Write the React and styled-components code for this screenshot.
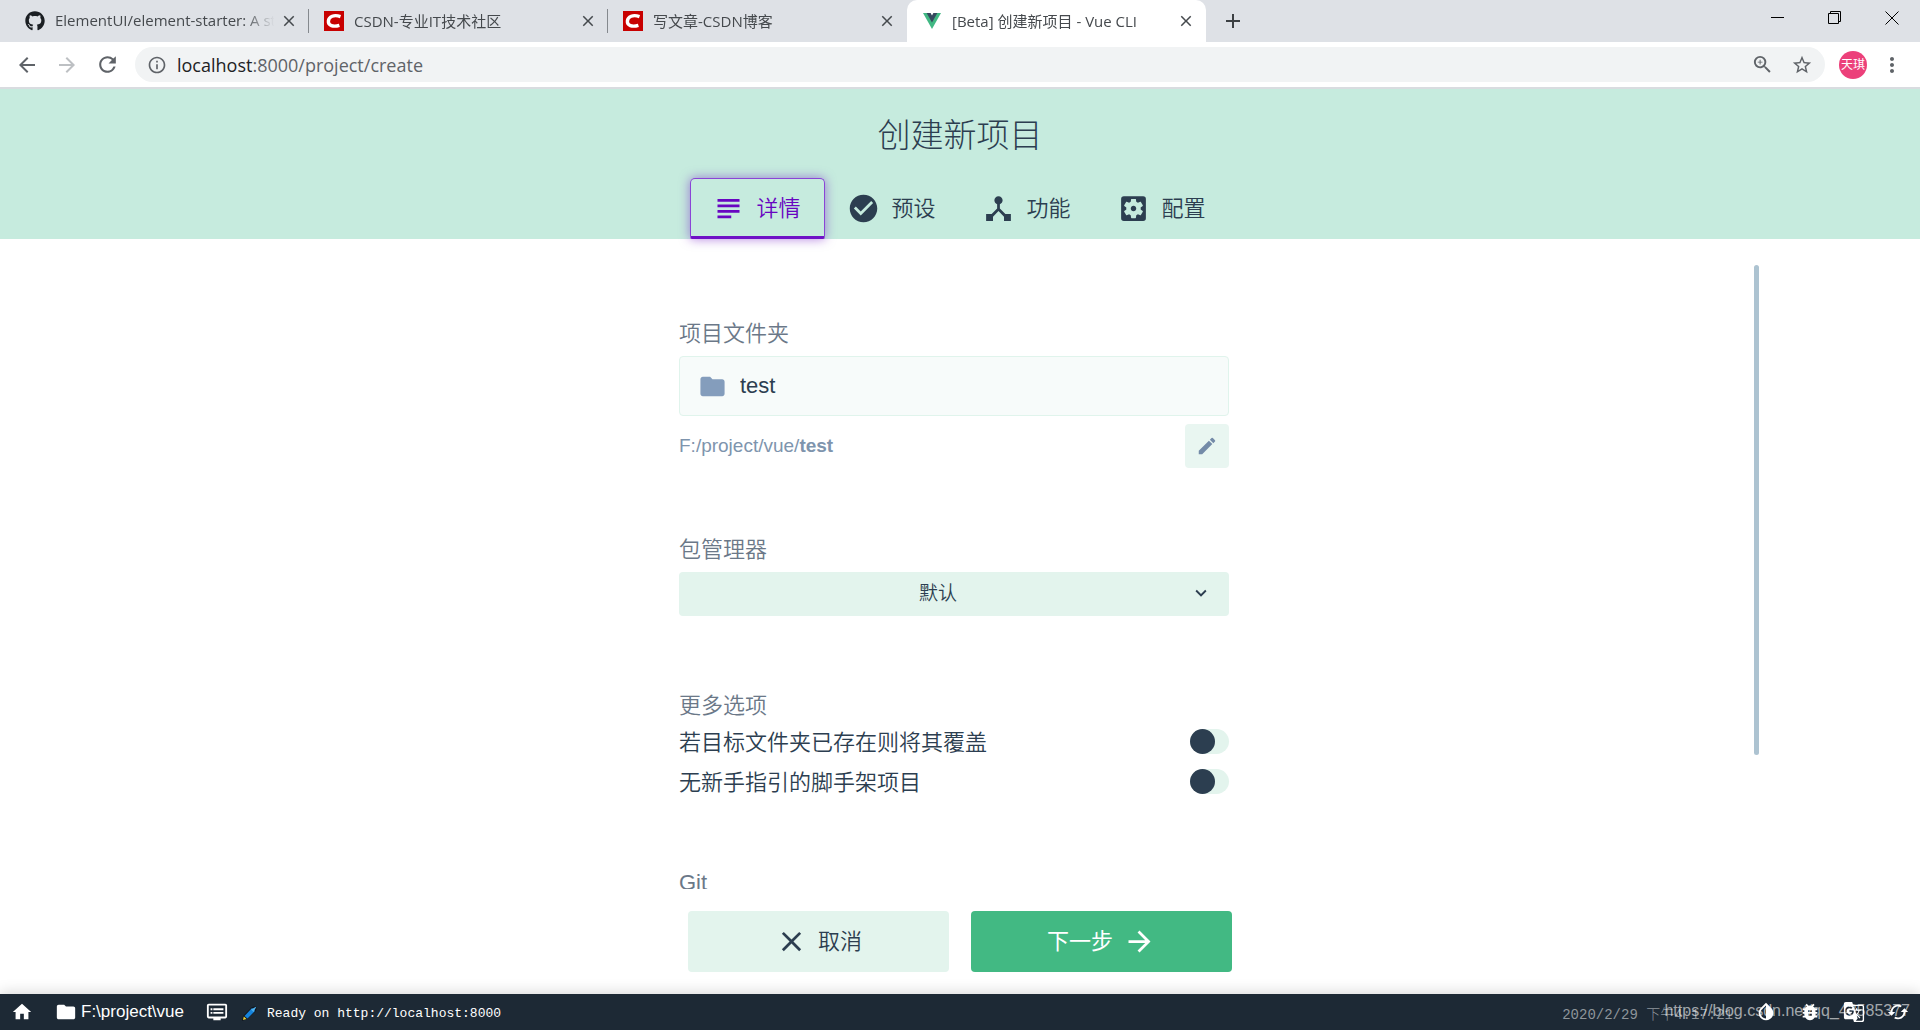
import React from 'react';
import styled, { createGlobalStyle } from 'styled-components'
import {
  MdSubject, MdCheckCircle, MdDeviceHub, MdSettingsApplications, MdFolder, MdEdit,
  MdKeyboardArrowDown, MdClose, MdArrowForward, MdArrowBack, MdRefresh, MdInfoOutline,
  MdZoomIn, MdStarBorder, MdMoreVert, MdHome, MdDvr, MdInvertColors, MdBugReport,
  MdGTranslate, MdCached, MdAdd
} from 'react-icons/md'
import { FaGithub } from 'react-icons/fa'

const GlobalStyle = createGlobalStyle`
  *{
    box-sizing: border-box;
  }
  body{
    margin: 0;
    font-family: 'Liberation Sans', 'Noto Sans CJK SC', sans-serif;
    color: #2c3e50;
    background-color: #fff;
  }
  button, input, select{
    font: inherit;
    color: inherit;
    border: none;
    margin: 0;
    padding: 0;
    background: none;
  }
  svg{
    flex: none;
    display: block;
  }
`

const Page = styled.div`
  height: 100vh;
  display: flex;
  flex-direction: column;
  overflow: hidden;
`

/* browser */
const TabStrip = styled.div`
  height: 42px;
  display: flex;
  flex: none;
  background-color: #dee1e6;
  font-family: 'Open Sans', 'Noto Sans CJK SC', sans-serif;
  font-size: 15px;
  color: #45494d;
  padding-left: 10px;
`

const BrowserTab = styled.div`
  width: 299px;
  display: flex;
  align-items: center;
  padding: 0 10px 0 15px;
  background-color: ${({ $active }) => $active ? '#fff' : 'transparent'};
  border-radius: 10px 10px 0 0;
  position: relative;
  .name{
    flex: 1;
    margin-left: 10px;
    padding-bottom: 2px;
    white-space: nowrap;
    overflow: hidden;
    mask-image: linear-gradient(to right, #000 84%, transparent 98%);
  }
  &::after{
    content: '';
    display: ${({ $divider }) => $divider ? 'block' : 'none'};
    width: 1px;
    height: 24px;
    background-color: #85898e;
    position: absolute;
    right: 0;
    top: 9px;
  }
`

const IconButton = styled.button`
  width: ${({ $size }) => $size || 20}px;
  height: ${({ $size }) => $size || 20}px;
  display: flex;
  align-items: center;
  justify-content: center;
  flex: none;
`

const NewTab = styled(IconButton)`
  align-self: center;
  margin-left: 17px;
  color: #3c4043;
`

const WindowButtons = styled.div`
  display: flex;
  align-items: flex-start;
  margin-left: auto;
  color: #000;
  button{
    width: 57px;
    height: 36px;
  }
`

const Toolbar = styled.div`
  height: 47px;
  display: flex;
  align-items: center;
  flex: none;
  padding: 0 16px 0 7px;
  border-bottom: 2px solid #d9dce0;
  color: #5f6368;
`

const Address = styled.div`
  flex: 1;
  height: 35px;
  display: flex;
  align-items: center;
  background-color: #f1f3f4;
  border-radius: 18px;
  margin: 0 14px 0 8px;
  padding: 0 3px 0 12px;
`

const Url = styled.div`
  flex: 1;
  margin-left: 10px;
  font-family: 'Open Sans', sans-serif;
  font-size: 18px;
  .host{
    color: #202124;
  }
`

const Avatar = styled.div`
  width: 28px;
  height: 28px;
  border-radius: 100%;
  background-color: #ec407a;
  color: #fff;
  font-size: 12px;
  line-height: 28px;
  text-align: center;
  margin-right: 13px;
`

/* page header */
const Header = styled.header`
  flex: none;
  height: 150px;
  display: flex;
  flex-direction: column;
  align-items: center;
  justify-content: space-between;
  background-color: #c6ebde;
  position: relative;
  z-index: 1;
  h1{
    margin: 23px 0 0;
    font-size: 33px;
    line-height: 48px;
    font-weight: 300;
  }
`

const Steps = styled.div`
  display: flex;
`

const Step = styled.button`
  height: 61px;
  width: 135px;
  display: flex;
  align-items: center;
  justify-content: center;
  gap: 11px;
  padding: 2px 2px 0 0;
  font-size: 22px;
  font-weight: 350;
  color: ${({ $active }) => $active ? '#6806c1' : '#2c3e50'};
  border: 1px solid ${({ $active }) => $active ? '#8a44d6' : 'transparent'};
  border-bottom: 3px solid ${({ $active }) => $active ? '#6f12c6' : 'transparent'};
  border-radius: 5px 5px 2px 2px;
  box-shadow: ${({ $active }) => $active ? '0 0 11px rgba(104, 6, 193, .5)' : 'none'};
  span{
    padding-bottom: 6px;
  }
`

/* form */
const Main = styled.main`
  flex: 1;
  min-height: 0;
  width: 100%;
  max-width: 1600px;
  margin: 0 auto;
  display: flex;
  overflow: hidden;
`

const Content = styled.div`
  flex: 1;
  padding-top: 80px;
`

const Form = styled.form`
  max-width: 550px;
  margin: 0 auto;
`

const Scrollbar = styled.div`
  width: 12px;
  padding: 26px 1px 0 6px;
  &::before{
    content: '';
    display: block;
    height: 490px;
    border-radius: 3px;
    background-color: #adc3d1;
  }
`

const Field = styled.section`
  padding-bottom: ${({ $bottom }) => $bottom || 0}px;
  &+&{
    margin-top: 67px;
  }
`

const Label = styled.label`
  display: block;
  font-size: 22px;
  line-height: 30px;
  font-weight: 350;
  color: #6b7888;
  margin-bottom: ${({ $gap }) => $gap || 0}px;
`

const FolderInput = styled.div`
  height: 60px;
  display: flex;
  align-items: center;
  gap: 13px;
  padding: 0 18px;
  border: 1px solid #e0f4ec;
  border-radius: 4px;
  background-color: #f7fbfa;
  color: #849dbc;
  input{
    flex: 1;
    font-size: 22px;
    color: #2c3e50;
    outline: none;
  }
`

const PathRow = styled.div`
  display: flex;
  align-items: center;
  justify-content: space-between;
  margin-top: 8px;
  font-size: 19px;
  color: #7e94ad;
`

const EditButton = styled(IconButton)`
  border-radius: 4px;
  background-color: #e9f6f1;
  color: #748ba8;
`

const SelectBox = styled.div`
  position: relative;
  select{
    appearance: none;
    width: 100%;
    height: 44px;
    padding: 0 32px 2px 0;
    border-radius: 4px;
    background-color: #e3f4ed;
    font-size: 19px;
    font-weight: 350;
    text-align: center;
    text-align-last: center;
  }
  svg{
    position: absolute;
    right: 17px;
    top: 10px;
    pointer-events: none;
  }
`

const Option = styled.label`
  height: 40px;
  display: flex;
  align-items: center;
  justify-content: space-between;
  font-size: 22px;
  font-weight: 350;
  span{
    padding-bottom: 2px;
  }
`

const Switch = styled.input`
  appearance: none;
  width: 39px;
  height: 25px;
  border-radius: 13px;
  background-color: #e3f4ed;
  display: flex;
  &::before{
    content: '';
    width: 25px;
    height: 25px;
    border-radius: 100%;
    background-color: #2c3e50;
  }
  &:checked{
    justify-content: flex-end;
  }
`

const Actions = styled.div`
  flex: none;
  display: flex;
  justify-content: center;
  gap: 22px;
  padding: 22px 0;
  background-color: #fff;
`

const ActionButton = styled.button`
  width: 261px;
  height: 61px;
  display: flex;
  align-items: center;
  justify-content: center;
  gap: 10px;
  border-radius: 4px;
  font-size: 22px;
  font-weight: ${({ $primary }) => $primary ? 400 : 350};
  color: ${({ $primary }) => $primary ? '#fff' : '#2c3e50'};
  background-color: ${({ $primary }) => $primary ? '#42b983' : '#e3f4ed'};
  span{
    padding-bottom: 5px;
  }
`

/* status bar */
const StatusBar = styled.footer`
  flex: none;
  height: 36px;
  display: flex;
  align-items: center;
  background-color: #1d2935;
  color: #fff;
  box-shadow: 0 -2px 14px rgba(0, 0, 0, .15);
  position: relative;
  padding-left: 11px;
`

const StatusItem = styled.button`
  display: flex;
  align-items: center;
  gap: 4px;
  margin-right: 22px;
  font-size: 17px;
`

const Log = styled.div`
  flex: 1;
  display: flex;
  align-items: center;
  gap: 9px;
  margin-left: -9px;
  padding-top: 2px;
  font-family: 'Liberation Mono', 'Noto Sans CJK SC', monospace;
  font-size: 13px;
  time{
    margin-left: auto;
    font-size: 14px;
    color: #8e959b;
    font-weight: 300;
  }
`

const StatusIcons = styled.div`
  display: flex;
  margin-left: 11px;
`

const Watermark = styled.div`
  position: absolute;
  right: 10px;
  top: 7px;
  font-size: 16px;
  line-height: 20px;
  color: rgba(255, 255, 255, .6);
  pointer-events: none;
`

const CsdnIcon = () => (
  <svg width="20" height="20" viewBox="0 0 20 20">
    <path d="M0 0h20v20H0z" fill="#c80000"/>
    <path d="M16.5 5.6C10 3.300 4.800 5.500 4.400 10c-.4 4.500 4.600 6.200 11 4.300" fill="none" stroke="#fff" strokeWidth="3.400"/>
  </svg>
)

const VueIcon = () => (
  <svg width="20" height="20" viewBox="0 0 20 20">
    <path d="M1 2h18l-9 16z" fill="#41b883"/>
    <path d="M4.600 2h10.800L10 11.500z" fill="#35495e"/>
    <path d="M8.600 2h2.800L10 4.500z" fill="#fff"/>
  </svg>
)

const RocketIcon = () => (
  <svg width="17" height="17" viewBox="0 0 17 17">
    <path d="M1 16l1-5 9-9 5-1-1 5-9 8z" fill="#10151c"/>
    <path d="M3.500 11l7.500-8 3 3L6.500 13.500z" fill="#1683dc"/>
    <path d="M10 4.500L15.500 1.500 12.500 7z" fill="#4eb1ef"/>
    <path d="M2 15l.8-3.500L5.500 14z" fill="#f0d43a"/>
  </svg>
)

const tabs = [
  { name: 'ElementUI/element-starter: A starter kit', icon: <FaGithub size={20} color="#1b1f23"/>, divider: true },
  { name: 'CSDN-专业IT技术社区', icon: <CsdnIcon/>, divider: true },
  { name: '写文章-CSDN博客', icon: <CsdnIcon/> },
  { name: '[Beta] 创建新项目 - Vue CLI', icon: <VueIcon/>, active: true },
]

const steps = [
  { name: '详情', icon: MdSubject, active: true },
  { name: '预设', icon: MdCheckCircle },
  { name: '功能', icon: MdDeviceHub },
  { name: '配置', icon: MdSettingsApplications },
]

const Browser = () => {
  return (
    <>
      <TabStrip>
        {tabs.map(({ name, icon, active, divider }) => (
          <BrowserTab key={name} $active={active} $divider={divider}>
            {icon}
            <span className="name">{name}</span>
            <IconButton aria-label="关闭标签页"><MdClose size={18}/></IconButton>
          </BrowserTab>
        ))}
        <NewTab aria-label="新标签页"><MdAdd size={24}/></NewTab>
        <WindowButtons>
          <IconButton aria-label="最小化">
            <svg width="14" height="14" viewBox="0 0 14 14"><path d="M0 6.500h13" stroke="currentColor"/></svg>
          </IconButton>
          <IconButton aria-label="还原">
            <svg width="14" height="14" viewBox="0 0 14 14"><path d="M.5 2.500h10v10H.5zM2.500 2.500v-2h10v10h-2" fill="none" stroke="currentColor"/></svg>
          </IconButton>
          <IconButton aria-label="关闭">
            <svg width="14" height="14" viewBox="0 0 14 14"><path d="M.5.5l13 13M13.500.5l-13 13" stroke="currentColor"/></svg>
          </IconButton>
        </WindowButtons>
      </TabStrip>
      <Toolbar>
        <IconButton $size={40} aria-label="后退"><MdArrowBack size={24}/></IconButton>
        <IconButton $size={40} aria-label="前进"><MdArrowForward size={24} color="#bdc0c3"/></IconButton>
        <IconButton $size={40} aria-label="刷新"><MdRefresh size={25}/></IconButton>
        <Address>
          <MdInfoOutline size={20}/>
          <Url><span className="host">localhost</span>:8000/project/create</Url>
          <IconButton $size={40} aria-label="缩放"><MdZoomIn size={23}/></IconButton>
          <IconButton $size={40} aria-label="收藏"><MdStarBorder size={22}/></IconButton>
        </Address>
        <Avatar>天琪</Avatar>
        <IconButton $size={24} aria-label="菜单"><MdMoreVert size={24}/></IconButton>
      </Toolbar>
    </>
  );
};

const App = () => {
  return (
    <Page>
      <GlobalStyle/>
      <Browser/>
      <Header>
        <h1>创建新项目</h1>
        <Steps role="tablist">
          {steps.map(({ name, icon: Icon, active }) => (
            <Step key={name} role="tab" aria-selected={!!active} $active={active}>
              <Icon size={33}/><span>{name}</span>
            </Step>
          ))}
        </Steps>
      </Header>
      <Main>
        <Content>
          <Form>
            <Field>
              <Label htmlFor="folder" $gap={7}>项目文件夹</Label>
              <FolderInput>
                <MdFolder size={29}/>
                <input id="folder" type="text" defaultValue="test"/>
              </FolderInput>
              <PathRow>
                <span>F:/project/vue/<b>test</b></span>
                <EditButton type="button" $size={44} aria-label="编辑"><MdEdit size={22}/></EditButton>
              </PathRow>
            </Field>
            <Field $bottom={8}>
              <Label htmlFor="manager" $gap={7}>包管理器</Label>
              <SelectBox>
                <select id="manager">
                  <option>默认</option>
                </select>
                <MdKeyboardArrowDown size={22}/>
              </SelectBox>
            </Field>
            <Field>
              <Label as="div">更多选项</Label>
              <Option><span>若目标文件夹已存在则将其覆盖</span><Switch type="checkbox"/></Option>
              <Option><span>无新手指引的脚手架项目</span><Switch type="checkbox"/></Option>
            </Field>
            <Field>
              <Label as="div">Git</Label>
            </Field>
          </Form>
        </Content>
        <Scrollbar/>
      </Main>
      <Actions>
        <ActionButton><MdClose size={33}/><span>取消</span></ActionButton>
        <ActionButton $primary><span>下一步</span><MdArrowForward size={33}/></ActionButton>
      </Actions>
      <StatusBar>
        <StatusItem aria-label="主页"><MdHome size={22}/></StatusItem>
        <StatusItem><MdFolder size={22}/>F:\project\vue</StatusItem>
        <StatusItem aria-label="日志"><MdDvr size={22}/></StatusItem>
        <Log>
          <RocketIcon/>
          <span>Ready on http://localhost:8000</span>
          <time>2020/2/29 下午4:17:21</time>
        </Log>
        <StatusIcons>
          <IconButton $size={44} aria-label="主题"><MdInvertColors size={22}/></IconButton>
          <IconButton $size={44} aria-label="报告问题"><MdBugReport size={22}/></IconButton>
          <IconButton $size={44} aria-label="翻译"><MdGTranslate size={22}/></IconButton>
          <IconButton $size={44} aria-label="重置"><MdCached size={22}/></IconButton>
        </StatusIcons>
        <Watermark>https://blog.csdn.net/qq_43585377</Watermark>
      </StatusBar>
    </Page>
  );
};

export default App;
